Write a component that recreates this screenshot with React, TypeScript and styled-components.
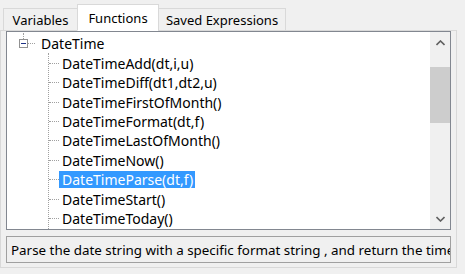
import { styled, createGlobalStyle } from 'styled-components'

const GlobalStyle = createGlobalStyle`
  html, body {
    margin: 0;
    padding: 0;
    background: #f0f0f0;
  }
  body {
    font-family: "Noto Sans", "Open Sans", sans-serif;
    font-size: 13px;
    color: #000;
  }
`

const Window = styled.div`
  width: 465px;
  height: 274px;
  background: #f0f0f0;
  display: flex;
  flex-direction: column;
  overflow: hidden;
`

const TabStrip = styled.div`
  display: flex;
  align-items: flex-end;
  height: 30px;
  padding-left: 3px;
  position: relative;
  z-index: 1;
`

const Tab = styled.div<{ $width: number; $active?: boolean }>`
  width: ${p => p.$width}px;
  height: ${p => (p.$active ? 27 : 23)}px;
  box-sizing: border-box;
  margin-left: -1px;
  margin-bottom: -1px;
  border: 1px solid #d9d9d9;
  border-bottom: 1px solid ${p => (p.$active ? '#ffffff' : '#d9d9d9')};
  background: ${p => (p.$active ? '#ffffff' : '#f0f0f0')};
  display: flex;
  align-items: center;
  justify-content: center;
  padding-top: ${p => (p.$active ? 0 : 1)}px;
  white-space: nowrap;

  &:first-child {
    margin-left: 0;
  }
`

const Panel = styled.div`
  width: 457px;
  height: 238px;
  box-sizing: border-box;
  border: 1px solid #d9d9d9;
  background: #f0f0f0;
  padding: 0 5px 0 5px;
  display: flex;
  flex-direction: column;
  gap: 6px;
`

const TreeBox = styled.div`
  height: 199px;
  box-sizing: border-box;
  border: 1px solid #828790;
  background: #ffffff;
  display: flex;
  font-size: 14px;
`

const TreeBody = styled.div`
  flex: 1;
  padding-top: 2px;
  overflow: hidden;
  position: relative;
`

const Row = styled.div<{ $indent: number }>`
  height: 19.45px;
  display: flex;
  align-items: center;
  padding-left: ${p => p.$indent}px;
  position: relative;
  white-space: nowrap;
`

const ExpandBox = styled.span`
  width: 9px;
  height: 9px;
  box-sizing: border-box;
  border: 1px solid #919191;
  background: #ffffff;
  display: flex;
  align-items: center;
  justify-content: center;
  position: relative;

  &::after {
    content: '';
    width: 5px;
    height: 1px;
    background: #1e3287;
  }

  &::before {
    content: '';
    position: absolute;
    left: 3px;
    bottom: 8px;
    height: 6px;
    border-left: 1px dotted #a0a0a0;
  }
`

const HDots = styled.span<{ $width: number }>`
  width: ${p => p.$width}px;
  height: 0;
  border-top: 1px dotted #a0a0a0;
`

const ChildLine = styled.div`
  position: absolute;
  left: 41px;
  top: 21px;
  bottom: 0;
  border-left: 1px dotted #a0a0a0;
`

const Label = styled.span<{ $selected?: boolean }>`
  padding: 0 2px 0 3px;
  height: 17px;
  line-height: 17px;
  background: ${p => (p.$selected ? '#3399ff' : 'transparent')};
  color: ${p => (p.$selected ? '#ffffff' : '#000000')};
`

const ScrollBar = styled.div`
  width: 20px;
  background: #f0f0f0;
  display: flex;
  flex-direction: column;
  align-items: stretch;
`

const ArrowButton = styled.div`
  height: 21px;
  display: flex;
  align-items: center;
  justify-content: center;
`

const Track = styled.div`
  flex: 1;
  padding-top: 14px;
`

const Thumb = styled.div`
  height: 56px;
  background: #cdcdcd;
`

const Description = styled.div`
  height: 27px;
  box-sizing: border-box;
  border: 1px solid #a0a0a0;
  background: #f0f0f0;
  padding-left: 4px;
  font-size: 13.4px;
  display: flex;
  align-items: center;
  white-space: nowrap;
  overflow: hidden;
`

const functions = [
  'DateTimeAdd(dt,i,u)',
  'DateTimeDiff(dt1,dt2,u)',
  'DateTimeFirstOfMonth()',
  'DateTimeFormat(dt,f)',
  'DateTimeLastOfMonth()',
  'DateTimeNow()',
  'DateTimeParse(dt,f)',
  'DateTimeStart()',
  'DateTimeToday()',
]

const Chevron = ({ up }: { up?: boolean }) => (
  <svg width="9" height="6" viewBox="0 0 9 6">
    <polyline
      points={up ? '0.5,5 4.5,1 8.5,5' : '0.5,1 4.5,5 8.5,1'}
      fill="none"
      stroke="#606060"
      strokeWidth="1.6"
    />
  </svg>
)

const App = () => {
  return (
    <Window>
      <GlobalStyle />
      <TabStrip>
        <Tab $width={75}>Variables</Tab>
        <Tab $width={82} $active>Functions</Tab>
        <Tab $width={128}>Saved Expressions</Tab>
      </TabStrip>
      <Panel>
        <TreeBox>
          <TreeBody>
            <Row $indent={12}>
              <ExpandBox />
              <HDots $width={7} />
              <Label style={{ marginLeft: 3 }}>DateTime</Label>
            </Row>
            <ChildLine />
            {functions.map(name => (
              <Row $indent={42} key={name}>
                <HDots $width={10} />
                <Label $selected={name === 'DateTimeParse(dt,f)'}>{name}</Label>
              </Row>
            ))}
          </TreeBody>
          <ScrollBar>
            <ArrowButton>
              <Chevron up />
            </ArrowButton>
            <Track>
              <Thumb />
            </Track>
            <ArrowButton>
              <Chevron />
            </ArrowButton>
          </ScrollBar>
        </TreeBox>
        <Description>
          Parse the date string with a specific format string , and return the time
        </Description>
      </Panel>
    </Window>
  )
}

export default App
